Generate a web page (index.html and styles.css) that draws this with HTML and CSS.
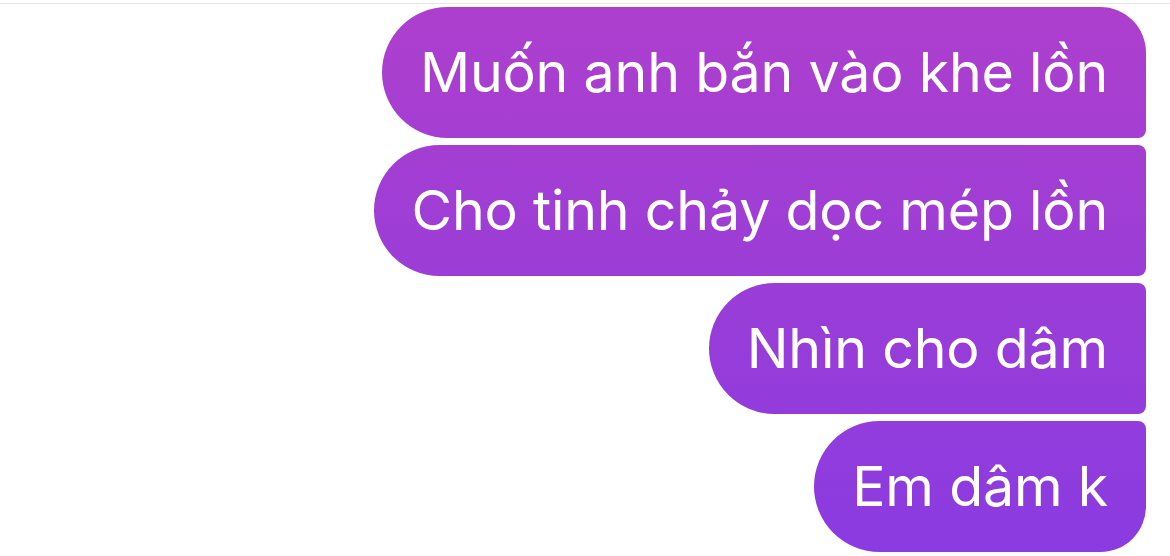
FILE: index.html
```html
<!DOCTYPE html>
<html lang="vi">
<head>
<meta charset="utf-8">
<link rel="stylesheet" href="styles.css">
</head>
<body>
<div class="topline"></div>
<div class="thread">
  <div class="bubble first">Muốn anh bắn vào khe lồn</div>
  <div class="bubble">Cho tinh chảy dọc mép lồn</div>
  <div class="bubble">Nhìn cho dâm</div>
  <div class="bubble last">Em dâm k</div>
</div>
</body>
</html>
```
FILE: styles.css
```css
html, body {
  margin: 0;
  padding: 0;
  background: #ffffff;
}
body {
  width: 1170px;
  height: 556px;
  overflow: hidden;
  font-family: Inter, "Noto Sans", "Liberation Sans", sans-serif;
}
.topline {
  height: 3px;
  border-bottom: 1px solid #e6e6e6;
}
.thread {
  display: flex;
  flex-direction: column;
  align-items: flex-end;
  gap: 7px;
  padding: 3px 24px 0 0;
}
.bubble {
  height: 131px;
  box-sizing: border-box;
  display: flex;
  align-items: center;
  padding: 0 38px 2px;
  color: #ffffff;
  font-size: 55.5px;
  font-weight: 400;
  letter-spacing: -0.2px;
  white-space: nowrap;
  border-radius: 66px 8px 8px 66px;
  background: linear-gradient(180deg, #ae3fcd 0px, #9b3dd7 280px, #8a3be1 556px);
  background-attachment: fixed;
}
.bubble.first {
  border-top-right-radius: 46px;
}
.bubble.last {
  border-bottom-right-radius: 46px;
}
```
